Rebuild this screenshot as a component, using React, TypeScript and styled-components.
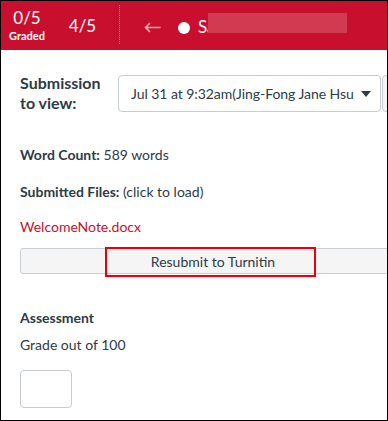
import { FC } from "react";
import styled, { createGlobalStyle } from "styled-components";

const GlobalStyle = createGlobalStyle`
  * {
    box-sizing: border-box;
  }

  body {
    margin: 0;
    font-family: Lato, "Liberation Sans", sans-serif;
    color: #2d3b45;
    background: #ffffff;
  }
`;

const Frame = styled.div`
  width: 388px;
  height: 421px;
  border: 1px solid #000000;
  overflow: hidden;
  position: relative;
`;

const Header = styled.header`
  height: 49px;
  background: #c8102e;
  color: #ffffff;
  display: flex;
  align-items: flex-start;
  padding-left: 7px;
`;

const StatBlock = styled.div<{ $top: number; $width: number; $gap: number }>`
  display: flex;
  flex-direction: column;
  align-items: center;
  width: ${(p) => p.$width}px;
  margin-top: ${(p) => p.$top}px;
  margin-right: ${(p) => p.$gap}px;
`;

const StatValue = styled.span`
  font-size: 17px;
  line-height: 20px;
`;

const StatLabel = styled.span`
  font-size: 11px;
  font-weight: 700;
  line-height: 14px;
  margin-top: 1px;
`;

const Divider = styled.div`
  width: 0;
  height: 39px;
  margin-top: 4px;
  border-left: 1px dotted rgba(255, 255, 255, 0.6);
  margin-right: 24px;
`;

const Student = styled.div`
  display: flex;
  align-items: center;
  height: 49px;
  margin-top: 2px;
`;

const BackArrow = styled.svg`
  width: 17px;
  height: 11px;
  margin-right: 17px;
`;

const Dot = styled.span`
  width: 12px;
  height: 12px;
  border-radius: 50%;
  background: #ffffff;
  margin-right: 8px;
`;

const Name = styled.span`
  position: relative;
  font-size: 17px;
  line-height: 20px;
  margin-top: -1px;
`;

const Redaction = styled.span`
  position: absolute;
  left: 10px;
  top: -4px;
  width: 139px;
  height: 20px;
  background: #d23a52;
`;

const Content = styled.main`
  width: 420px;
  padding: 23px 0 0 19px;
`;

const ViewRow = styled.div`
  display: flex;
  align-items: center;
  height: 40px;
`;

const ViewLabel = styled.label`
  flex: none;
  width: 98px;
  font-size: 16px;
  font-weight: 700;
  line-height: 20px;
`;

const Select = styled.div`
  flex: none;
  display: flex;
  align-items: center;
  justify-content: space-between;
  width: 263px;
  height: 37px;
  padding: 0 9px 0 12px;
  border: 1px solid #c7cdd1;
  border-radius: 4px;
  font-size: 14px;
  letter-spacing: -0.05px;
  white-space: nowrap;
  margin-top: 1px;
`;

const Caret = styled.span`
  flex: none;
  width: 0;
  height: 0;
  border-left: 5px solid transparent;
  border-right: 5px solid transparent;
  border-top: 6px solid #2d3b45;
`;

const SideButton = styled.div`
  flex: none;
  width: 40px;
  height: 37px;
  margin-left: 1px;
  margin-top: 1px;
  border: 1px solid #c7cdd1;
  border-radius: 4px;
  background: #f5f5f5;
`;

const Line = styled.p<{ $top: number; $weight?: number }>`
  margin: ${(p) => p.$top}px 0 0;
  font-size: 14px;
  line-height: 20px;
  font-weight: ${(p) => p.$weight ?? 400};
`;

const Strong = styled.strong`
  font-weight: 700;
`;

const FileLink = styled.a`
  display: block;
  margin-top: 15px;
  font-size: 14px;
  line-height: 20px;
  color: #c8102e;
  text-decoration: none;
`;

const ResubmitWrap = styled.div`
  position: relative;
  margin-top: 11px;
  width: 386px;
`;

const ResubmitButton = styled.button`
  width: 100%;
  height: 26px;
  background: #f5f5f5;
  border: 1px solid #c7cdd1;
  border-radius: 3px;
  font-family: inherit;
  font-size: 14px;
  color: #2d3b45;
  padding: 0;
`;

const Highlight = styled.span`
  position: absolute;
  left: 85px;
  top: -1px;
  width: 211px;
  height: 30px;
  border: 2px solid #e8000b;
  pointer-events: none;
`;

const GradeInput = styled.input`
  display: block;
  margin-top: 15px;
  width: 52px;
  height: 38px;
  border: 1px solid #c9cccf;
  border-radius: 4px;
  background: #ffffff;
`;

const App: FC = () => {
  return (
    <>
      <GlobalStyle />
      <Frame>
        <Header>
          <StatBlock $top={7} $width={38} $gap={23}>
            <StatValue>0/5</StatValue>
            <StatLabel>Graded</StatLabel>
          </StatBlock>
          <StatBlock $top={15} $width={27} $gap={23}>
            <StatValue>4/5</StatValue>
          </StatBlock>
          <Divider />
          <Student>
            <BackArrow viewBox="0 0 17 11" fill="none">
              <path
                d="M16.5 5.5H1.5M6 1L1.5 5.5L6 10"
                stroke="#f3aab7"
                strokeWidth="1.6"
              />
            </BackArrow>
            <Dot />
            <Name>
              Sa
              <Redaction />
            </Name>
          </Student>
        </Header>
        <Content>
          <ViewRow>
            <ViewLabel>Submission to view:</ViewLabel>
            <Select>
              <span>Jul 31 at 9:32am(Jing-Fong Jane Hsu</span>
              <Caret />
            </Select>
            <SideButton />
          </ViewRow>
          <Line $top={32}>
            <Strong>Word Count:</Strong> 589 words
          </Line>
          <Line $top={17}>
            <Strong>Submitted Files:</Strong> (click to load)
          </Line>
          <FileLink href="#">WelcomeNote.docx</FileLink>
          <ResubmitWrap>
            <ResubmitButton>Resubmit to Turnitin</ResubmitButton>
            <Highlight />
          </ResubmitWrap>
          <Line $top={34} $weight={700}>
            Assessment
          </Line>
          <Line $top={7}>Grade out of 100</Line>
          <GradeInput type="text" />
        </Content>
      </Frame>
    </>
  );
};

export default App;
